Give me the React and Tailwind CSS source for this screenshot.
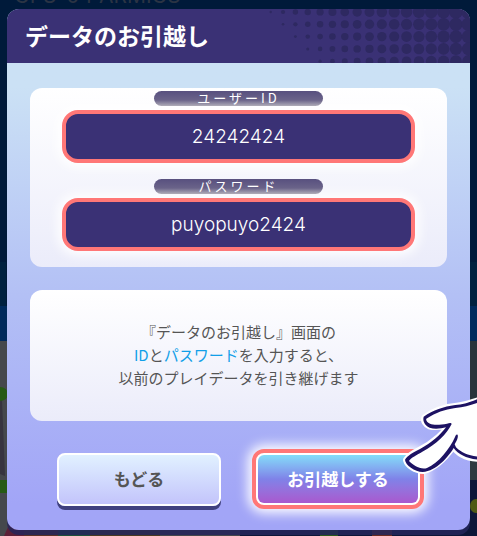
import { useState } from "react";

// halftone columns grow towards the right edge of the header
const DOT_COLUMNS = Array.from({ length: 17 }, (_, i) => i);
const DOT_ROWS = [0, 1, 2, 3, 4];

function dotRadius(col, row) {
  return 6.8 * Math.sqrt(Math.max(0, col + 0.5 - row * 0.9) / 16);
}

function Halftone() {
  return (
    <svg className="absolute right-0 top-0 h-full w-[202px]" viewBox="0 0 202 54" aria-hidden="true">
      {DOT_ROWS.map((row) =>
        DOT_COLUMNS.map((col) => (
          <circle
            key={`${row}-${col}`}
            cx={2.7 + col * 12.35}
            cy={3 + row * 12.3}
            r={dotRadius(col, row)}
            fill="#2e2961"
          />
        ))
      )}
    </svg>
  );
}

// dimmed game scene behind the dialog
function Backdrop() {
  return (
    <svg className="absolute inset-0 h-full w-full" viewBox="0 0 477 536" preserveAspectRatio="none" aria-hidden="true">
      <rect width="477" height="536" fill="#001a3a" />
      <rect y="262" width="6" height="44" fill="#00213f" />
      <rect x="470" y="262" width="7" height="44" fill="#00213f" />
      <rect y="306" width="477" height="35" fill="#002a5c" />
      <rect y="341" width="240" height="195" fill="#45484c" />
      <path d="M0 400L2 400L5 476L0 474Z" fill="#37343f" />
      <ellipse cx="0" cy="394" rx="8" ry="7" fill="#265a14" />
      <rect y="480" width="7" height="13" fill="#265a14" />
      <rect x="240" y="341" width="237" height="120" fill="#29343b" />
      <rect x="240" y="455" width="237" height="25" fill="#2e3a3f" />
      <rect x="240" y="480" width="237" height="56" fill="#0c1638" />
      <ellipse cx="476" cy="506" rx="6" ry="7" fill="#4e5a14" />
      <path d="M4 536L12 518H24V536Z" fill="#5c2038" />
      <rect x="24" y="526" width="34" height="10" fill="#5a3326" />
      <rect x="58" y="526" width="32" height="10" fill="#20503a" />
      <rect x="90" y="526" width="70" height="10" fill="#4a3a22" />
      <rect x="320" y="526" width="18" height="10" fill="#2c5a1c" />
      <rect x="372" y="526" width="20" height="10" fill="#6a2a20" />
    </svg>
  );
}

function Hand() {
  return (
    <svg
      className="pointer-events-none absolute -right-[7px] bottom-[55px] h-[83px] w-[80px]"
      viewBox="21 36 240 249"
      fill="none"
      strokeLinejoin="round"
      strokeLinecap="round"
      aria-hidden="true"
    >
      <path
        d="M275 60C240 70 225 77 200 79C165 82 135 92 105 113C101 122 108 133 118 137C140 143 162 137 180 133C170 155 130 190 90 211C72 220 58 228 50 240C54 255 76 270 100 271C140 262 168 228 190 197C205 222 235 235 275 235Z"
        fill="#fff"
        stroke="#fff"
        strokeWidth="22"
      />
      <path
        d="M275 52C235 69 220 74 196 75C160 80 130 90 101 110C97 124 106 137 119 143C135 149 155 145 168 142C152 164 125 188 90 207C70 217 52 227 45 239C46 255 74 275 98 276C140 273 176 229 191 204C206 225 235 238 275 240V230C240 229 217 221 198 202L194 193C202 180 205 171 203 165C200 162 197 165 195 171C180 205 145 250 111 264C92 271 68 254 57 243C61 234 82 224 97 215C140 192 170 162 185 132C183 127 178 129 171 131C151 135 130 136 120 131C111 127 107 121 109 116C140 97 162 89 196 84C225 82 243 74 275 65Z"
        fill="#1d1263"
      />
    </svg>
  );
}

function Field({ id, label, value, onChange }) {
  return (
    <div className="flex flex-col items-center gap-1">
      <label
        htmlFor={id}
        className="z-10 h-[15px] w-[169px] rounded-full bg-linear-to-b from-[#58507f] via-[#6a6389] via-60% to-[#b0adb8] text-center text-[13px] leading-[13px] tracking-[3px] text-white"
      >
        {label}
      </label>
      <input
        id={id}
        type="text"
        value={value}
        onChange={(e) => onChange(e.target.value)}
        className="h-[53px] w-full rounded-[16px] border-4 border-[#ff7777] bg-[#3a3175] text-center font-['Inter',sans-serif] text-[19px] font-light text-white shadow-[0_0_12px_4px_#ffffff] outline-none"
      />
    </div>
  );
}

function App() {
  const [userId, setUserId] = useState("24242424");
  const [password, setPassword] = useState("puyopuyo2424");

  return (
    <div className="relative min-h-screen overflow-hidden px-[7px] pt-[9px] pb-[6px] font-['Noto_Sans_CJK_JP',sans-serif]">
      <Backdrop />
      <p className="absolute -top-[16px] left-[14px] font-['Inter',sans-serif] text-[21px] leading-[24px] text-[#2b3444]">
        GPS-04 ARMIGS
      </p>

      <main className="relative rounded-xl bg-linear-to-b from-[#cbe1f5] from-15% via-[#b3c0f5] via-55% to-[#a2a5f7] to-95% shadow-[0_5px_0_#25265ad9]">
        <header className="relative h-[54px] overflow-hidden rounded-t-xl bg-[#3a3175] px-[18px]">
          <Halftone />
          <h1 className="relative text-[23px] leading-[52px] font-bold text-white">データのお引越し</h1>
        </header>

        <div className="px-[23px] pt-[25px] pb-[21px]">
          <section className="flex flex-col gap-4 rounded-xl bg-linear-to-b from-white to-[#ebecfa] px-8 pt-[3px] pb-4">
            <Field id="user-id" label="ユーザーID" value={userId} onChange={setUserId} />
            <Field id="password" label="パスワード" value={password} onChange={setPassword} />
          </section>

          <p className="mt-[23px] rounded-xl bg-linear-to-b from-white to-[#ebecfa] pt-[30px] pb-8 text-center text-[15px] leading-[23px] text-[#555]">
            『データのお引越し』画面の
            <br />
            <span className="text-[#119fe8]">ID</span>と<span className="text-[#119fe8]">パスワード</span>を入力すると、
            <br />
            以前のプレイデータを引き継げます
          </p>

          <div className="mt-7 flex items-center justify-between pr-[23px] pl-[27px]">
            <button
              type="button"
              className="h-[53px] w-[164px] rounded-lg border-2 border-white bg-linear-to-b from-[#e1f1ff] to-[#c3c4fb] text-[17px] font-bold text-[#555] shadow-[0_4px_0_#40417f]"
            >
              もどる
            </button>
            <button
              type="button"
              className="h-[60px] w-[172px] rounded-xl border-4 border-[#ff7777] bg-white p-[2px] shadow-[0_0_12px_4px_#ffffff]"
            >
              <span className="flex h-full items-center justify-center rounded-md bg-linear-to-b from-[#83dcf8] via-[#7f82e8] to-[#a958ce] text-[17px] font-bold text-white">
                お引越しする
              </span>
            </button>
          </div>
        </div>

        <Hand />
      </main>
    </div>
  );
}

export default App;
